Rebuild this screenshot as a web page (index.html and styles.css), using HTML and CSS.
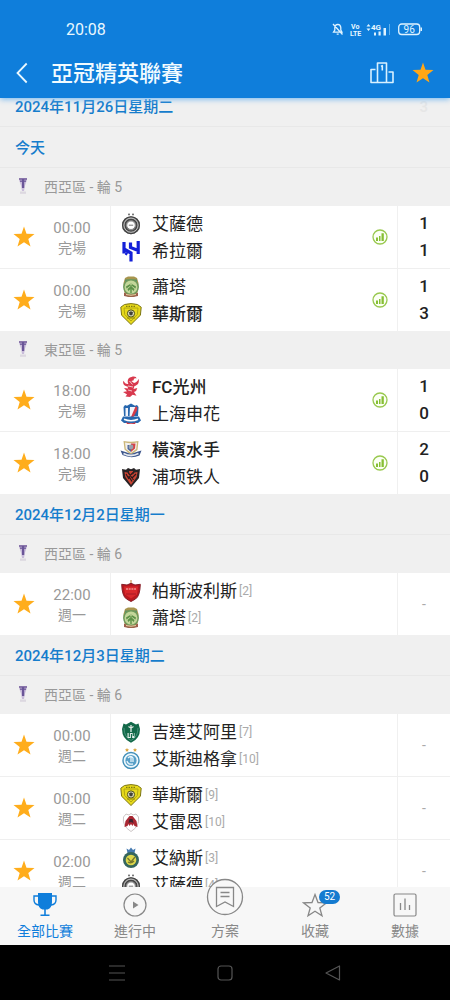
FILE: index.html
```html
<!DOCTYPE html>
<html lang="zh-Hant">
<head>
<meta charset="utf-8">
<meta name="viewport" content="width=device-width, initial-scale=1">
<title>亞冠精英聯賽</title>
<link rel="stylesheet" href="styles.css">
</head>
<body>
<svg class="sprite" aria-hidden="true">
  <symbol id="star" viewBox="0 0 22 22"><path fill="currentColor" d="M11 .4l2.500 7.300 8 .3-6.200 4.900 2.200 7.700L11 16.200l-6.500 4.400 2.200-7.700L.5 8l8-.3z"/></symbol>
  <symbol id="cup" viewBox="0 0 12 18"><path fill="#8a76ab" d="M2 1h8v2H2z"/><path fill="#c9bcda" d="M2 3h8l-2 5.500L7 14H5L4 8.500z"/><path fill="#6b5698" d="M5 2h2.200v9H5z"/><path fill="#6b5698" d="M3 3.500h6v1.300H3z"/><path fill="#dcd8e0" d="M3 14.500h6v2.300H3z"/></symbol>
  <symbol id="stats" viewBox="0 0 16 16"><circle cx="8" cy="8" r="7" fill="#fbfff4" stroke="#98c84e" stroke-width="1.300"/><path fill="#86bf33" d="M4 8.500h2V12H4zM7 7h1.500v5H7zM9.500 4.300h2.300V12H9.500z"/></symbol>

  <symbol id="sadd" viewBox="0 0 22 22"><path fill="#777" d="M8 .3l1 .7 1-.7v2H8zM12 .3l1 .7 1-.7v2h-2z"/><circle cx="11" cy="12.200" r="9" fill="#777"/><g fill="none" stroke="#444"><circle cx="11" cy="12.200" r="8.300" stroke-width="1.400"/><circle cx="11" cy="12.200" r="5.900" stroke-width="1.300"/></g><circle cx="11" cy="12.200" r="7.100" fill="none" stroke="#ddd" stroke-width=".7"/><circle cx="11" cy="12.200" r="4.300" fill="#fff" stroke="#888"/><path stroke="#777" d="M8.800 12.200h4.400"/></symbol>
  <symbol id="hilal" viewBox="0 0 22 22"><path fill="none" stroke="#1420d8" stroke-width="3.200" d="M4 2v11.500M4 9l7 4v8.500M18.200 1v13M10.500 2.500v5l7.700 3M5.500 13l2 1"/></symbol>
  <symbol id="shorta" viewBox="0 0 22 22"><path fill="#a8954e" d="M5 2l3-1.500h6L17 2l1.500 5-.8 9L14 21H8l-3.700-5-.8-9z"/><path fill="#5d8f68" d="M5 3.500h12v3H5z"/><ellipse cx="11" cy="11" rx="7.200" ry="7.300" fill="#c3d69a" stroke="#6f9a5c" stroke-width="1.500"/><path fill="#5c9148" d="M10.300 8h1.400v9h-1.400zM11 7.500l-5 3 .5 2L11 9.300l4.500 3.200.5-2zM7.500 13l3.500-3 3.500 3-.8 2L11 12.500 8.300 15z"/><path fill="#9b5f4c" d="M4 16.500q7 4 14 0V20q-7 2-14 0z"/><path stroke="#e3d5a1" d="M6 18.500q5 1.500 10 0" fill="none"/></symbol>
  <symbol id="wasl" viewBox="0 0 22 22"><path fill="#e7d91a" stroke="#7a7415" d="M4.500 1.500q6.500-1.800 13 0l3.700 2.700-.8 8L11 21.500 1.600 12.200l-.8-8z"/><path fill="none" stroke="#b2a812" d="M4 5h14l-.7 6.500L11 18l-6.300-6.500z"/><path stroke="#67630f" stroke-dasharray="1.500 1" d="M6 3.300h10"/><circle cx="11" cy="10.500" r="3.600" fill="#dcdcc0" stroke="#515014"/><path fill="#424239" d="M9 9.300l2-1 2 1-.7 3H9.700z"/><path stroke="#8c840f" d="M7 15h8"/></symbol>
  <symbol id="gwangju" viewBox="0 0 22 22"><g fill="#d8394e"><path d="M11.500 1c3-1 5 0 5 1.500-2-.8-3 .3-2.700 1.800l-2.500.8L14 7c2-.7 4-2.200 4.700-4.300.7 4.300-.9 6.300-4.200 7.300l-1 3 3.800-.9-1.200 2.800L14 16l2.500 3.700-3.900-1L10 21l-4.500-.5 1.600-2L3 16l4-.8L4 12l4 .6-.4-2C4 10 2.300 7.500 3.500 4.800 4.500 7 6 8.200 8.300 8l-.6-2C7.500 3 9 1.500 11.500 1z"/></g><path fill="none" stroke="#fff" stroke-width=".7" d="M9.500 5l3 3.500M8 10l5 1M8 14l4 1"/></symbol>
  <symbol id="shenhua" viewBox="0 0 22 22"><path fill="#2767ae" d="M5 2l2 .7L11 .5l4 2.200 2-.7 1.500 2-.5 9H4l-.5-9z"/><path fill="#f2f3fa" d="M5.500 5H8v9H5.500zM10 4h7L12 14H9.500z"/><path fill="#d33b48" d="M15.500 3.500l1.800.5-.3 3.500-3.500 6.500H11z"/><path fill="#2767ae" d="M3 13.500h16l2 4-3 2.500H4l-3-2.500z"/><path fill="none" stroke="#fff" stroke-width="1.600" d="M4 16.200q7 3 14 0"/><path fill="#cb3d4a" d="M6 19q5 2.500 10 0l-1 2H7z"/></symbol>
  <symbol id="marinos" viewBox="0 0 22 22"><path fill="#ccb779" d="M3.500 2q7.500 1.500 15 0l-1 9L11 16l-6.500-5.500z"/><path fill="#f2f0ed" d="M5 3.500q6 1.300 12 0l-.8 6.500L11 14l-5.200-4z"/><path fill="#4c669b" d="M7.500 6H11v7L7.500 10z"/><path fill="#d34447" d="M11 4.500h4.500L15 9.500l-4 3.500z"/><circle cx="11" cy="8" r="2.400" fill="#98a1ac"/><path fill="#3d568b" d="M.5 11.500l5 1.500 5.500 2 5.500-2 5-1.500-2 5Q11 20 2.500 16z"/><path stroke="#e5e9ef" fill="none" stroke-width="1.800" d="M3.500 14.500q7.500 4 15 0"/></symbol>
  <symbol id="pohang" viewBox="0 0 22 22"><path fill="#272325" d="M2 3l4 .7L8 2l3 1.200L14 2l2 1.700 4-.7-1 9-8 9.500L3 12z"/><path fill="#c94332" d="M4.500 6l3 .5 2 2.500L9 5h4l-.5 4 2-2.500 3-.5-.8 5L11 19l-5.700-8z"/><path fill="none" stroke="#27191b" stroke-width="1.200" d="M6 8l3 5M8.500 7l5 7M16 8l-4 4M13 6.500l-4 4 3 5"/></symbol>
  <symbol id="persepolis" viewBox="0 0 22 22"><path fill="#bd7d31" d="M10.500 0h1v4h-1z"/><path fill="#b9181e" stroke="#86202a" d="M1.700 4.300L7 5l4-1.700L15 5l5.300-.7Q20 16 15.500 19L11 21.500 6.500 19Q2 16 1.700 4.300z"/><path fill="#d9282b" d="M4 6.500h14l-1 8-6 4-6-4z"/><path stroke="#fbc6bd" stroke-dasharray="2 .7" d="M6 9h10"/><path stroke="#a51a26" d="M6 14h10"/></symbol>
  <symbol id="ahli" viewBox="0 0 22 22"><path fill="#136949" d="M3.500 2.500L6 3.500l5-2.700 5 2.700 2.500-1L20 8q0 10-9 13.700Q2 18 2 8z"/><path fill="none" stroke="#45917a" d="M4 7q0 9 7 12.500Q18 16 18 7"/><path stroke="#e0eee8" stroke-width="1.300" d="M11 4v7M8.500 5.500L11 7l2.500-1.500"/><path fill="#e3eee9" d="M7.500 12h7v5h-7z"/><path stroke="#136949" stroke-width="1.200" d="M9.300 12v4M11.500 13v4M13.300 12v3"/></symbol>
  <symbol id="esteghlal" viewBox="0 0 22 22"><path fill="#daa43d" d="M7 0l.7 1.200L9 1.400l-1 1 .2 1.400L7 3.100l-1.200.7.2-1.400-1-1 1.300-.2zM15 0l.7 1.200 1.300.2-1 1 .2 1.400-1.200-.7-1.200.7.2-1.400-1-1 1.300-.2z"/><circle cx="11" cy="12.500" r="8" fill="#eef8fc" stroke="#418fb8" stroke-width="1.400"/><circle cx="11" cy="12.500" r="5.600" fill="#579fc7"/><path fill="none" stroke="#e7f4fa" stroke-width="1.300" d="M8 10q3-3 5 0v4M7 13q1 4 6 3M11 9v5"/></symbol>
  <symbol id="rayyan" viewBox="0 0 22 22"><path fill="#fff" stroke="#cdc6c6" d="M6 3l3 1 2-1.500L13 4l3-1 2.500 3Q20 15 11 20.500 2 15 3.500 6z"/><path fill="#a92732" d="M9.500 5h3l4 5 1 6-3-1-1-2-1 2-1.500-2-1.500 2-1-2-1 2-3 1 1-6z"/><path fill="#3d2430" d="M9.500 8h3l1 4-2.500-1-2.500 1z"/></symbol>
  <symbol id="nassr" viewBox="0 0 22 22"><path fill="#457ab0" d="M6.500 1.500L9 3l2-2.500L13 3l2.500-1.500-1 4.500h-7z"/><circle cx="11" cy="13" r="8" fill="#35665e"/><circle cx="11" cy="13" r="5.300" fill="#ddd84c"/><path fill="none" stroke="#76772b" stroke-width="1.300" d="M7.500 11l3.500 4 4-5M8 15q3 2 6-1"/></symbol>
</svg>

<div class="screen">
  <header class="top">
    <div class="status">
      <span class="clock">20:08</span>
      <svg class="status-icons" viewBox="0 0 92 18" role="img" aria-label="4G 96%">
        <g fill="none" stroke="#dff3ff" stroke-width="1.300"><path d="M1.500 12.200h8.500L8.800 10V7.500Q8.500 4.500 5.800 4.300 3 4.500 2.800 7.500V10zM4.700 14.200h2M1 4l9.500 10.500"/><rect x="66.700" y="4" width="21" height="10.500" rx="3"/></g>
        <path fill="#dff3ff" d="M88.500 7.500h1.500v3.500h-1.500zM34.500 6.500l2-2.500 2 2.500zM34.500 8.500l2 2.500 2-2.500zM42 12.500h2V15.500h-2zM46.500 11.500h2.200v4h-2.200zM51.500 8h2.500v7.500h-2.500z"/>
        <path stroke="#5eb0ed" d="M57.500 4v11"/>
        <g fill="#e9f8ff"><text class="tiny" x="19" y="9">Vo</text><text class="tiny" x="18" y="16">LTE</text><text class="net" x="39" y="10">4G</text></g>
        <text class="charge" x="77.200" y="12.500" text-anchor="middle" fill="#dff3ff">96</text>
      </svg>
    </div>
    <div class="bar">
      <button class="icon-btn back" aria-label="返回"><svg viewBox="0 0 12 22"><path fill="none" stroke="#e9f8ff" stroke-width="1.800" d="M10.700 1.500L1.500 11l9.200 9.500"/></svg></button>
      <h1>亞冠精英聯賽</h1>
      <button class="icon-btn table-btn" aria-label="積分榜"><svg viewBox="0 0 24 22"><path fill="none" stroke="#d9f1ff" stroke-width="1.600" stroke-linejoin="round" d="M5.500 7.500H1v13h22v-10.500h-4.500M7.500 20.500V1h9v19.500M11 4.500l1.300-.8V8.500"/></svg></button>
      <button class="icon-btn fav" aria-label="收藏聯賽"><svg><use href="#star"/></svg></button>
    </div>
  </header>

  <main class="list">
    <div class="feed">
      <h2 class="date under">2024年11月26日星期二<span>3</span></h2>
      <h2 class="date">今天</h2>
      <h3 class="comp"><svg><use href="#cup"/></svg>西亞區 - 輪 5</h3>
      <section class="group">
        <article class="match">
          <button class="pin" aria-label="收藏"><svg><use href="#star"/></svg></button>
          <div class="when"><time>00:00</time><span>完場</span></div>
          <div class="teams"><p><svg><use href="#sadd"/></svg>艾薩德</p><p><svg><use href="#hilal"/></svg>希拉爾</p></div>
          <button class="stat" aria-label="統計"><svg><use href="#stats"/></svg></button>
          <div class="score"><b>1</b><b>1</b></div>
        </article>
        <article class="match">
          <button class="pin" aria-label="收藏"><svg><use href="#star"/></svg></button>
          <div class="when"><time>00:00</time><span>完場</span></div>
          <div class="teams"><p><svg><use href="#shorta"/></svg>蕭塔</p><p class="win"><svg><use href="#wasl"/></svg>華斯爾</p></div>
          <button class="stat" aria-label="統計"><svg><use href="#stats"/></svg></button>
          <div class="score"><b>1</b><b>3</b></div>
        </article>
      </section>
      <h3 class="comp"><svg><use href="#cup"/></svg>東亞區 - 輪 5</h3>
      <section class="group">
        <article class="match">
          <button class="pin" aria-label="收藏"><svg><use href="#star"/></svg></button>
          <div class="when"><time>18:00</time><span>完場</span></div>
          <div class="teams"><p class="win"><svg><use href="#gwangju"/></svg>FC光州</p><p><svg><use href="#shenhua"/></svg>上海申花</p></div>
          <button class="stat" aria-label="統計"><svg><use href="#stats"/></svg></button>
          <div class="score"><b>1</b><b>0</b></div>
        </article>
        <article class="match">
          <button class="pin" aria-label="收藏"><svg><use href="#star"/></svg></button>
          <div class="when"><time>18:00</time><span>完場</span></div>
          <div class="teams"><p class="win"><svg><use href="#marinos"/></svg>橫濱水手</p><p lang="zh-Hans"><svg><use href="#pohang"/></svg>浦项铁人</p></div>
          <button class="stat" aria-label="統計"><svg><use href="#stats"/></svg></button>
          <div class="score"><b>2</b><b>0</b></div>
        </article>
      </section>
      <h2 class="date">2024年12月2日星期一</h2>
      <h3 class="comp"><svg><use href="#cup"/></svg>西亞區 - 輪 6</h3>
      <section class="group">
        <article class="match">
          <button class="pin" aria-label="收藏"><svg><use href="#star"/></svg></button>
          <div class="when"><time>22:00</time><span>週一</span></div>
          <div class="teams"><p><svg><use href="#persepolis"/></svg>柏斯波利斯<small>[2]</small></p><p><svg><use href="#shorta"/></svg>蕭塔<small>[2]</small></p></div>
          <div class="score none">-</div>
        </article>
      </section>
      <h2 class="date">2024年12月3日星期二</h2>
      <h3 class="comp"><svg><use href="#cup"/></svg>西亞區 - 輪 6</h3>
      <section class="group">
        <article class="match">
          <button class="pin" aria-label="收藏"><svg><use href="#star"/></svg></button>
          <div class="when"><time>00:00</time><span>週二</span></div>
          <div class="teams"><p><svg><use href="#ahli"/></svg>吉達艾阿里<small>[7]</small></p><p><svg><use href="#esteghlal"/></svg>艾斯迪格拿<small>[10]</small></p></div>
          <div class="score none">-</div>
        </article>
        <article class="match">
          <button class="pin" aria-label="收藏"><svg><use href="#star"/></svg></button>
          <div class="when"><time>00:00</time><span>週二</span></div>
          <div class="teams"><p><svg><use href="#wasl"/></svg>華斯爾<small>[9]</small></p><p><svg><use href="#rayyan"/></svg>艾雷恩<small>[10]</small></p></div>
          <div class="score none">-</div>
        </article>
        <article class="match">
          <button class="pin" aria-label="收藏"><svg><use href="#star"/></svg></button>
          <div class="when"><time>02:00</time><span>週二</span></div>
          <div class="teams"><p><svg><use href="#nassr"/></svg>艾納斯<small>[3]</small></p><p><svg><use href="#sadd"/></svg>艾薩德<small>[4]</small></p></div>
          <div class="score none">-</div>
        </article>
      </section>
    </div>
  </main>

  <nav class="tabs">
    <a href="#all" class="tab active"><svg viewBox="0 0 26 26"><path fill="currentColor" d="M6 1h14v9q0 6-4.500 7.500H10.500Q6 16 6 10zM12.200 17h1.600v6h-1.600zM8.500 22.500h9V24h-9z"/><path fill="none" stroke="currentColor" stroke-width="1.400" d="M6 4H2v4q0 4.500 5 5M20 4h4v4q0 4.500-5 5"/></svg><span>全部比賽</span></a>
    <a href="#live" class="tab"><svg viewBox="0 0 26 26"><circle cx="13" cy="13" r="11" fill="none" stroke="currentColor" stroke-width="1.200"/><path fill="currentColor" d="M11 9.500l5.500 3.500-5.500 3.500z"/></svg><span>進行中</span></a>
    <a href="#plan" class="tab plan"><svg viewBox="0 0 38 38"><circle cx="19" cy="19" r="17.500" fill="#f8f8f8" stroke="currentColor" stroke-width="1.300"/><path fill="none" stroke="currentColor" stroke-width="1.300" d="M10.500 9.500h17v19L19 24l-8.500 4.500zM14.500 14.500h9M14.500 18.500h9"/></svg><span>方案</span></a>
    <a href="#favs" class="tab"><span class="badged"><svg viewBox="0 0 26 26"><path fill="none" stroke="currentColor" stroke-width="1.300" d="M13 2.500l3 8 8.300.4-6.500 5.100 2.200 7.800-7-4.500-7 4.500L8.200 16 1.700 10.900l8.300-.4z"/></svg><em>52</em></span><span>收藏</span></a>
    <a href="#data" class="tab"><svg viewBox="0 0 26 26"><rect x="2" y="2" width="22" height="22" rx="1.500" fill="none" stroke="currentColor" stroke-width="1.200"/><path stroke="currentColor" stroke-width="1.300" d="M8.500 11v7M13 6.500V18M17.500 13v5"/></svg><span>數據</span></a>
  </nav>

  <footer class="system">
    <button aria-label="最近"><svg viewBox="0 0 18 18"><path stroke="currentColor" stroke-width="1.200" d="M1 2h16M1 9h16M1 16h16"/></svg></button>
    <button aria-label="主畫面"><svg viewBox="0 0 18 18"><rect x="2" y="2" width="14" height="14" rx="3" fill="none" stroke="currentColor" stroke-width="1.200"/></svg></button>
    <button aria-label="返回"><svg viewBox="0 0 18 18"><path fill="none" stroke="currentColor" stroke-width="1.200" stroke-linejoin="round" d="M15.500 2v14L2 9z"/></svg></button>
  </footer>
</div>
</body>
</html>
```
FILE: styles.css
```css
* { box-sizing: border-box; margin: 0; padding: 0; }
body { font-family: Roboto, "Noto Sans CJK TC", sans-serif; color: #222; background: #fff; }
button { border: 0; background: none; font: inherit; color: inherit; display: grid; place-items: center; }
svg { display: block; }
.sprite { position: absolute; width: 0; height: 0; }
.screen { height: 100vh; display: flex; flex-direction: column; overflow: hidden; }

.top { background: #0f7edb; color: #e9f8ff; position: relative; z-index: 2; box-shadow: 0 1px 6px #6db4ee; padding-top: 11px; }
.status { display: flex; justify-content: space-between; align-items: center; height: 36px; padding: 0 26px 0 66px; }
.clock { font-size: 16px; }
.status-icons { width: 92px; height: 18px; }
.tiny { font-size: 7px; font-weight: 700; }
.net { font-size: 8px; font-weight: 700; }
.charge { font-size: 10px; }
.bar { display: flex; align-items: center; height: 51px; padding: 0 16px; }
.back svg { width: 12px; height: 22px; }
.bar h1 { flex: 1; padding: 2px 0 0 23px; font-size: 22px; line-height: 30px; font-weight: 500; color: #f2fbff; }
.table-btn svg { width: 24px; height: 22px; }
.fav { margin-left: 18px; color: #ffa716; }
.fav svg { width: 22px; height: 22px; }

.list { flex: 1; min-height: 0; overflow: hidden; background: #f0f0f0; }
.feed { margin-top: -12px; }
.date { height: 41px; padding: 0 15px; font-size: 15px; line-height: 43px; font-weight: 500; color: #167dcc; border-bottom: 1px solid #e8e8e8; }
.date.under { display: flex; justify-content: space-between; padding-right: 22px; }
.date.under span { color: #e6e6e6; }
.comp { display: flex; align-items: center; gap: 15px; height: 38px; padding: 0 17px 2px; font-size: 14px; font-weight: 400; color: #999; }
.comp svg { width: 12px; height: 18px; }
.group { background: #fff; }
.match { display: flex; align-items: stretch; height: 62px; }
.match + .match { border-top: 1px solid #efefef; height: 63px; }
.pin { width: 48px; color: #ffad1c; }
.pin svg { width: 22px; height: 22px; }
.when { width: 48px; margin-right: 14px; display: flex; flex-direction: column; justify-content: center; text-align: center; padding-top: 1px; font-size: 14px; line-height: 20px; color: #999; }
.when time { font-size: 15px; }
.teams { flex: 1; display: flex; flex-direction: column; justify-content: center; border-left: 1px solid #f0f0f0; padding: 1px 0 0 9px; }
.teams p { display: flex; align-items: center; font-size: 17px; line-height: 27px; }
.teams svg { width: 22px; height: 22px; margin-right: 10px; }
.teams small { font-size: 12px; color: #aaa; padding-left: 2px; }
.teams .win { font-weight: 500; }
.teams [lang="zh-Hans"] { font-family: Roboto, "Noto Sans CJK SC", sans-serif; }
.stat { width: 34px; }
.stat svg { width: 16px; height: 16px; }
.score { width: 53px; display: flex; flex-direction: column; justify-content: center; text-align: center; border-left: 1px solid #f0f0f0; font-size: 17px; line-height: 27px; }
.score b { font-weight: 500; }
.score.none { color: #aaa; font-size: 14px; }

.tabs { display: flex; height: 58px; background: #f7f7f7; position: relative; z-index: 1; }
.tab { flex: 1; display: flex; flex-direction: column; align-items: center; justify-content: flex-end; gap: 2px; padding-bottom: 3px; font-size: 14px; line-height: 22px; color: #888; text-decoration: none; }
.tab svg { width: 26px; height: 26px; flex: none; }
.tab.plan { gap: 4px; }
.tab.plan svg { width: 38px; height: 38px; }
.tab.active { color: #0f7edb; }
.badged { position: relative; }
.badged em { position: absolute; left: 17px; top: -2px; width: 21px; height: 14px; border-radius: 7px; background: #147bd0; color: #fff; font-size: 10px; line-height: 14px; font-style: normal; text-align: center; }

.system { display: flex; justify-content: center; height: 55px; background: #000; color: #555; }
.system button { width: 24%; }
.system svg { width: 18px; height: 18px; }
```
